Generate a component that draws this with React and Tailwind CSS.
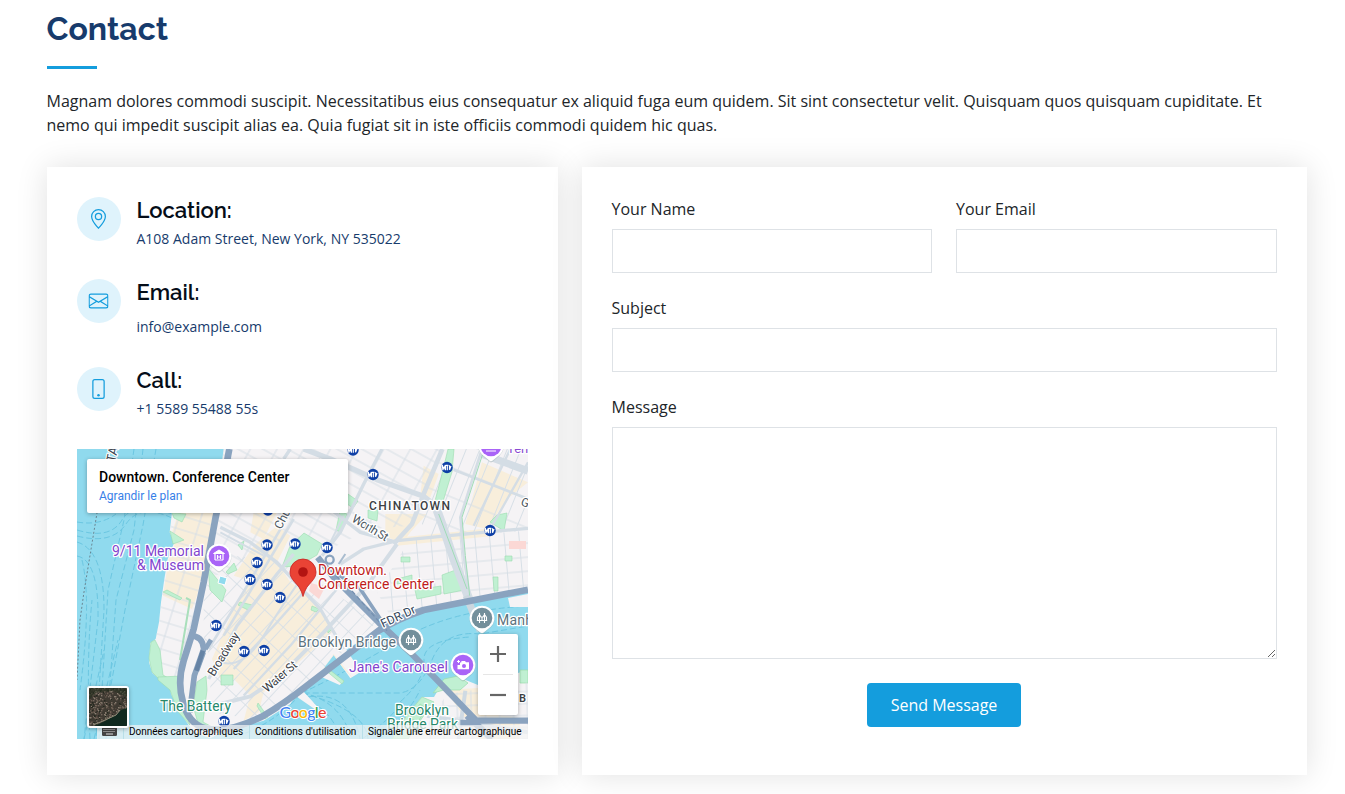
import React from "react";
import { BsGeoAlt, BsEnvelope, BsPhone } from "react-icons/bs";

const contacts = [
  { icon: BsGeoAlt, title: "Location:", text: "A108 Adam Street, New York, NY 535022", box: "h-[82px]", gap: "mt-[5px]" },
  { icon: BsEnvelope, title: "Email:", text: "info@example.com", box: "h-[88px]", gap: "mt-[11px]" },
  { icon: BsPhone, title: "Call:", text: "+1 5589 55488 55s", box: "h-[82px]", gap: "mt-[5px]" },
];

const metroStops = [
  [353, 450], [373, 474.5], [447, 467.5], [490, 530.5], [268, 510], [267, 545], [295, 544], [327, 547.5],
  [257, 562.5], [250, 579.5], [267, 584.5], [280, 597.5], [216, 625.5], [244, 651.5], [264, 650.5], [224, 721.5],
];

function Grid({ id, size, h, angle, width = 3, color = "#d7dfe6" }) {
  return (
    <pattern id={id} width={size} height={h} patternUnits="userSpaceOnUse" patternTransform={`rotate(${angle})`}>
      <path d={`M0 ${h / 2}H${size}M${size / 2} 0V${h}`} stroke={color} strokeWidth={width} fill="none" />
    </pattern>
  );
}

function Label({ x, y, w, children, fill, size = 14, weight = 400, rotate, spacing }) {
  return (
    <text
      x={x}
      y={y}
      textLength={w}
      fontSize={size}
      fontWeight={weight}
      fill={fill}
      stroke="#fff"
      strokeWidth="2.5"
      strokeLinejoin="round"
      paintOrder="stroke"
      letterSpacing={spacing}
      transform={rotate ? `rotate(${rotate} ${x} ${y})` : undefined}
    >
      {children}
    </text>
  );
}

function Poi({ x, y, fill, children }) {
  return (
    <g transform={`translate(${x} ${y})`}>
      <path d="M0-12.5a12.5 12.5 0 0 1 8.8 21.3L2 14.8Q0 16.5-2 14.8L-8.8 8.8A12.5 12.5 0 0 1 0-12.5Z" fill="#9aa" opacity=".35" transform="translate(0 .8)" />
      <path d="M0-12.3A12.3 12.3 0 0 1 8.7 8.7L2 14.2Q0 16-2 14.2L-8.7 8.7A12.3 12.3 0 0 1 0-12.3Z" fill="#fff" />
      <circle r="10.3" fill={fill} />
      {children}
    </g>
  );
}

const bridgeGlyph = (
  <path d="M-5.200 2.500H5.200M-2.500-5V5M2.500-5V5M-4.500-1V2.500M4.500-1V2.500M-4.700-.500L-2.500-3.500L-1-1H1L2.500-3.500L4.700-.500M0-1V2.500" stroke="#fff" strokeWidth="1.100" fill="none" />
);

const terrain = [];
for (let i = 0, s = 7; i < 420; i++) {
  s = (s * 16807) % 2147483647;
  const x = s % 38;
  s = (s * 16807) % 2147483647;
  const y = s % 38;
  s = (s * 16807) % 2147483647;
  if (x + y * 1.6 < 76) terrain.push([x, y, ["#8b7f72", "#54483f", "#25291f", "#6e6054", "#75685c"][s % 5]]);
}

const manhattan =
  "M440 0L415 190H285L278 250L292 280L272 330L262 390L252 460L246 520L236 570L220 582L216 640L226 672L244 688L275 686L282 735L312 795L350 850L400 868L440 846L560 815L640 765L655 740L716 782L722 774L676 724L725 680L788 708L800 697L742 655L770 618L820 688L852 668L808 602L850 575L940 528L1040 490L1353 425V0Z";

const routes = [
  [10, "M640 0L620 30M430 235L520 280L600 340L730 480L800 600"],
  [16, "M680 0L760 30L900 92L1040 142L1090 180"],
  [14, "M1096 0L1040 135L1005 225L950 285"],
  [26, "M1075 170L1095 225L1130 330L1182 465"],
  [10, "M395 690L480 530L600 375L650 315M735 320L790 250L860 105L915 0"],
  [8, "M395 600L520 395L590 275L640 190L730 30M440 560L545 385L650 210"],
  [10, "M740 165L850 250L960 280M790 345L860 300L960 275L1240 248L1353 238"],
  [12, "M430 765L520 742L600 690L740 550L870 410L960 285"],
  [8, "M1215 0L1150 205L1160 320L1178 440M1130 62L1353 150"],
  [22, "M1210 14L1353 66"],
  [7, "M1300 0L1190 230M1353 40L1240 240M500 740L640 590L780 420M470 660L600 520L680 430"],
  [6, "M430 640Q500 660 560 560T680 380M430 250L560 320M800 200L760 280"],
];

function CityMap() {
  return (
    <svg viewBox="77 449 451 290" width="451" height="290" className="block" fontFamily="Roboto, sans-serif">
      <defs>
        <Grid id="gWest" size={64} h={40} angle={17} />
        <Grid id="gCivic" size={70} h={36} angle={29} />
        <Grid id="gFi" size={62} h={38} angle={-47} width={2.6} />
        <Grid id="gEast" size={44} h={42} angle={-5} />
        <Grid id="gNorth" size={38} h={82} angle={22} />
        <Grid id="gBk" size={42} h={36} angle={-2} />
        <clipPath id="land"><path d={manhattan} /></clipPath>
      </defs>
      <path fill="#90daee" d="M77 449H528V739H77Z" />

      {/* ferry routes */}
      <g fill="none" stroke="#66c4e0" strokeWidth="1" strokeDasharray="6 3" opacity=".85">
        <path d="M134 449L124 520L108 590L99 739M143 449L134 530L116 600L106 739M156 449L143 525L125 610L110 690" />
        <path d="M77 530Q110 540 122 520T172 514M77 536Q112 545 126 524T172 518M77 542Q104 550 104 610L96 739M77 556Q99 560 98 620L84 739M82 560Q92 600 80 690M77 522Q100 526 116 514M90 739Q86 660 92 600" />
        <path d="M84 739L104 650M94 739L118 640" />
        <path d="M228 739Q270 728 302 693H400Q420 690 432 660T480 634L528 626M302 693Q350 670 400 640T528 606M302 693Q340 700 352 739M302 693Q366 710 368 739M308 697Q350 690 360 739M310 701Q335 715 340 739M400 702Q425 680 424 660T470 637" />
        <path d="M362 739Q390 720 402 702M380 739Q410 712 420 690" />
      </g>
      <path d="M108 449L97 513L84 592L80 620L77 680" fill="none" stroke="#6a8794" strokeWidth="1" strokeDasharray="2 2" />

      <g transform="translate(77 449) scale(.33333)" fill="none" strokeLinejoin="round">
        {/* Manhattan */}
        <path d={manhattan} fill="#f5f3f5" />
        <g clipPath="url(#land)">
          <g fill="#f8eedb">
            <path d="M305 190H412L395 290L360 440L345 480L258 440L275 330L292 290L285 250Z" />
            <path d="M405 630L470 480L520 395L470 380L530 290L600 230L640 260L600 340L640 400L700 440L770 545L700 610L560 730L545 790L500 815L520 740L470 690L430 690Z" />
            <path d="M530 190H600L560 270L520 250Z" />
            <path d="M925 195L1050 195L1000 250L975 285L925 260Z" />
            <path d="M1215 40L1353 100L1290 150L1230 240L1165 225Z" />
            <path d="M975 265L1240 238V262L960 290ZM1040 50L1085 75L1060 145L1030 140Z" />
            <path d="M725 680L770 615L830 690L780 640L760 640Z" />
          </g>
          <path d="M285 190H415L340 545L310 690H200L270 330Z" fill="url(#gWest)" />
          <path d="M430 0H1095L1000 230L880 240L760 300L640 260L380 400Z" fill="url(#gCivic)" />
          <path d="M380 420L470 320L640 340L900 520L560 815L400 790L400 640L380 560Z" fill="url(#gFi)" />
          <path d="M1000 270L1353 245V430L950 520L900 430Z" fill="url(#gEast)" />
          <path d="M1100 0H1353V245L1060 265L1020 200Z" fill="url(#gNorth)" />
        </g>
      </g>

      <g clipPath="none">
        {/* parks */}
        <g fill="#c0f0d2" stroke="#9bdcae" strokeWidth=".6">
          <path d="M282 567L290 546L304 533L322 544L317 555L298 566Z" />
          <path d="M448 449L454 449L452 472L441 508L435 501L443 470Z" />
          <path d="M348 494L358 501L353 508L347 504ZM340 511L347 514L341 532L336 530Z" />
          <path d="M497 515L507 513L504 531L490 522Z" />
          <path d="M442 575L461 568L464 590L444 594ZM397 579L412 575V581L397 584ZM401 557L410 557V562H401Z" />
          <path d="M368 510H378L377 521L368 518ZM505 556h7v5h-7zM415 590l26-4v8l-24 5zM493 577h5v14h-4z" />
          <path d="M172 513L186 514L182 522L174 518ZM170 531L184 540L173 544ZM163 592L167 590L182 598L180 600Z" />
          <path d="M208 568L226 590L222 602L210 590ZM226 572L234 563L237 570L228 574ZM238 545L244 541L242 550Z" />
          <path d="M155 640L160 650L163 675L170 679L160 680L152 672L149 658L151 642Z" />
          <path d="M158 677L183 676L180 690L184 708L190 725L178 712L170 690L158 680ZM197 682L206 676L207 690L203 722L214 728L200 730L193 706ZM221 675h12v10h-12zM258 703l10 14-3 2-8-13z" />
          <path d="M240 602l12 3-2 6-12-6zM312 606l7 3-3 3-5-2zM327 626l5 3-4 4zM326 667l18 14-2 3-18-15z" />
        </g>
        <path d="M220 576l7 2-2 7-7-2z" fill="#8fdaee" stroke="#fff" />
        <path d="M509 541l17 0v8h-17zM311 583l14 4-6 12-10-8z" fill="#fbd8d5" />
        <path d="M186 598L190 600L180 660" fill="none" stroke="#a9dfbb" strokeWidth="2" />

        {/* Brooklyn */}
        <path d="M392 739L407 715L422 697L434 697L444 680L458 677L478 685L528 670V739Z" fill="#f5f3f5" />
        <path d="M445 690L478 688V712L520 718L519 739H480Z" fill="#f8eedb" />
        <path d="M392 739L407 715L422 697L434 702L422 718L408 739ZM433 693L444 679L458 676L468 683L460 690L444 690ZM410 718l10-14 6 4-8 14zM520 670h8v13h-8z" fill="#c0f0d2" stroke="#9bdcae" strokeWidth=".7" />
        <path d="M508 598L528 594V607H510Z" fill="#f5f3f5" />
      </g>

      <g transform="translate(77 449) scale(.33333)" fill="none" strokeLinejoin="round">
        <path d="M1110 735L1210 720L1353 700V870H1020Z" fill="url(#gBk)" />
        {/* main streets */}
        <g stroke="#d4dde5" clipPath="url(#land)">
          {routes.map(([width, d]) => <path key={d} d={d} strokeWidth={width} />)}
        </g>
        <path d="M1145 870L1165 725M1050 800L1353 850" stroke="#cfdae3" strokeWidth="12" />
        <path d="M1168 440L1210 545" stroke="#ccd7df" strokeWidth="22" />
        <path d="M1222 0L1155 205L1165 320L1178 440M1085 195L1170 420" stroke="#9fdcb6" strokeWidth="3" />

        {/* expressways */}
        <g stroke="#8aa3bf">
          <path d="M457 0L440 90L415 210L380 400L350 540L320 635Q300 700 318 760Q335 825 385 838Q450 855 560 800Q620 765 690 710L905 545Q960 510 1040 483L1353 422" strokeWidth="20" />
          <path d="M338 560Q378 560 380 600L352 680L338 790" strokeWidth="17" />
          <path d="M380 610L360 665M385 600L402 572" strokeWidth="14" />
          <path d="M722 325L770 385L905 520L1000 610L1198 815H1353" strokeWidth="19" />
          <path d="M735 345L850 420L910 510" strokeWidth="11" />
          <circle cx="758" cy="332" r="12" strokeWidth="7" />
          <path d="M785 345L805 315" strokeWidth="6" stroke="#a9bccf" />
          <path d="M1170 800L1245 870M1150 822H1210" strokeWidth="20" />
        </g>
        <path d="M378 605L358 665" stroke="#6683a5" strokeWidth="14" />
        <path d="M745 350L820 420L930 545" stroke="#7590b0" strokeWidth="4" strokeDasharray="14 8" />
      </g>

      {/* transit */}
      {metroStops.map(([x, y]) => (
        <g key={`${x}-${y}`} transform={`translate(${x} ${y})`}>
          <circle r="5.700" fill="#0d3fa6" />
          <path d="M-4.800 2.800V-2.500L-3.200 1.500L-1.600-2.500V2.800M-1.200-2.100H1.400M.3-2V2.800M2.500-2.200V2.300L4-1.500" stroke="#fff" strokeWidth="1.200" fill="none" />
        </g>
      ))}

      <Label x={115} y={463} fill="#3c4650" size={13} rotate={-78}>TA</Label>
      <Label x={281} y={530} fill="#4a5560" size={12} rotate={-62}>Chur</Label>
      <Label x={351} y={521} w={40} fill="#4a5560" size={12} rotate={31}>Worth St</Label>
      <Label x={214} y={677} w={49} fill="#3c4248" size={12} rotate={-58}>Broadway</Label>
      <Label x={267} y={693} w={41} fill="#3c4248" size={12} rotate={-41}>Water St</Label>
      <Label x={383} y={628} w={37} fill="#34465a" size={12} rotate={-25}>FDR Dr</Label>
      <Label x={520} y={505} fill="#4a5560" size={12} rotate={20}>Gr</Label>
      <Label x={369} y={510} w={81} fill="#3c4043" size={12} weight={500}>CHINATOWN</Label>
      <Label x={507} y={453} fill="#8a4ad2" size={13}>Tene</Label>
      <Label x={112} y={556} w={92} fill="#8145ce">9/11 Memorial</Label>
      <Label x={137} y={570} w={67} fill="#8145ce">&amp; Museum</Label>
      <Label x={318} y={575} w={69} fill="#c01c1c">Downtown.</Label>
      <Label x={318} y={589} w={116} fill="#c01c1c">Conference Center</Label>
      <Label x={298} y={647} w={98} fill="#5b727d">Brooklyn Bridge</Label>
      <Label x={497} y={625} fill="#5b727d" spacing=".2">Manhattan</Label>
      <Label x={349} y={672} w={99} fill="#8145ce">Jane&apos;s Carousel</Label>
      <Label x={160} y={711} w={71} fill="#26896b">The Battery</Label>
      <Label x={395} y={715} w={54} fill="#26896b">Brooklyn</Label>
      <Label x={387} y={729} w={71} fill="#26896b">Bridge Park</Label>
      <Label x={519} y={702} fill="#3c4043" size={11} weight={600}>B</Label>

      <Poi x={219} y={556} fill="#a964f7">
        <path d="M-5.500-2.500L0-6L5.500-2.500ZM-4 4H4" fill="#fff" stroke="#fff" strokeWidth="1" />
        <path d="M-4-2V4M4-2V4M-1.500-1V3M1.500-1V3M-1.500 1H1.500" stroke="#fff" strokeWidth="1.200" />
      </Poi>
      <Poi x={463} y={665} fill="#a964f7">
        <path d="M-1.500-4H2l1 1.300h3v7H-5.500V0H-3V-2.500h1.200z" fill="#fff" /><circle cx="1" cy="1" r="2" fill="#a964f7" /><path d="M-4.500-5v3M-6-3.500h3" stroke="#fff" />
      </Poi>
      <Poi x={411} y={640} fill="#738f9b">{bridgeGlyph}</Poi>
      <Poi x={482} y={618} fill="#738f9b">{bridgeGlyph}</Poi>
      <Poi x={491} y={446} fill="#a964f7"><path d="M-5 5h10M-4 2h8" stroke="#fff" /></Poi>

      <path d="M303 596.500Q302 592 299 587C294 581 290 578 290 572A13 13 0 0 1 316 572C316 578 312 581 307 587Q304 592 303 596.500Z" fill="#ea4335" stroke="#c5221f" strokeWidth=".8" />
      <circle cx="303" cy="572" r="4.800" fill="#b31412" />

      <text x="279.500" y="718" fontSize="16" fontWeight="500" textLength="47" fontFamily="Lato, sans-serif" stroke="#fff" strokeWidth="2" paintOrder="stroke">
        <tspan fill="#4285f4">G</tspan><tspan fill="#ea4335">o</tspan><tspan fill="#fbbc04">o</tspan><tspan fill="#4285f4">g</tspan><tspan fill="#34a853">l</tspan><tspan fill="#ea4335">e</tspan>
      </text>
    </svg>
  );
}

function MapPanel() {
  return (
    <div className="relative ml-[0.5px] h-[290px] w-[451px] overflow-hidden font-['Roboto',sans-serif]">
      <CityMap />
      <div className="absolute left-[10px] top-[10px] h-[54px] w-[261px] rounded-[2px] bg-white pl-3 pt-[9px] shadow-[0_1px_4px_rgba(0,0,0,0.3)]">
        <div className="text-[14px] font-medium leading-[18px] text-black">Downtown. Conference Center</div>
        <div className="mt-px text-[12px] leading-[18px] text-[#3780e8]">Agrandir le plan</div>
      </div>
      <div className="absolute right-[10px] top-[185px] flex h-[81px] w-10 flex-col items-center rounded-[2px] bg-white shadow-[0_1px_4px_rgba(0,0,0,0.3)]">
        <svg width="40" height="40" viewBox="0 0 40 40"><path d="M12 20H28M20 12V28" stroke="#666" strokeWidth="2.200" /></svg>
        <div className="h-px w-[30px] bg-[#e6e6e6]" />
        <svg width="40" height="40" viewBox="0 0 40 40"><path d="M12 20H28" stroke="#666" strokeWidth="2.200" /></svg>
      </div>
      <div className="absolute bottom-0 right-0 flex h-[14px] w-[431px] items-center bg-[#f5f5f5]/70 text-[10px] leading-[14px] text-black">
        <span className="flex h-full w-[26px] shrink-0 items-center justify-center">
          <svg width="15" height="9" viewBox="0 0 15 9" className="-ml-px -mt-px">
            <rect width="15" height="9" rx="1.200" fill="#444" />
            <path d="M1.500 2.500H13.500M1.500 4.500H13.500" stroke="#ddd" strokeWidth="1" strokeDasharray="1 1" /><path d="M4 7H11" stroke="#ddd" strokeWidth="1" />
          </svg>
        </span>
        <span className="w-[126px] shrink-0 whitespace-nowrap border-l border-[#b9dfe8] pl-[5px]">Données cartographiques</span>
        <span className="w-[113px] shrink-0 whitespace-nowrap border-l border-[#b9dfe8] pl-[5px]">Conditions d&apos;utilisation</span>
        <span className="w-[166px] shrink-0 whitespace-nowrap border-l border-[#b9dfe8] pl-[5px]">Signaler une erreur cartographique</span>
      </div>
      <div className="absolute bottom-[11px] left-[10px] size-[42px] overflow-hidden rounded-[3px] border-2 border-white bg-white shadow-[0_1px_4px_rgba(0,0,0,0.3)]">
        <svg width="38" height="38" viewBox="0 0 38 38">
          <path d="M0 0H38V38H0Z" fill="#3f3a32" />
          {terrain.map(([x, y, c], i) => <rect key={i} x={x} y={y} width="1.400" height="1.400" fill={c} />)}
          <path d="M0 0H38V9L24 3L8 4L0 12Z" fill="#26301f" opacity=".6" />
          <path d="M6 38L14 34L27 27L32 22L38 20V38Z" fill="#10291f" />
          <path d="M4 37L14 33L27 27L31 22" stroke="#8f8c78" strokeWidth="1" fill="none" />
        </svg>
      </div>
    </div>
  );
}

function Field({ label, className = "", children }) {
  return (
    <label className={`flex flex-col gap-2 ${className}`}>
      <span className="leading-6">{label}</span>
      {children}
    </label>
  );
}

const control = "block w-full border border-[#dee2e6] bg-white px-[15px] outline-none";
const card = "bg-white p-[30px] shadow-[0_0_30px_rgba(0,0,0,0.12)]";

export default function App() {
  return (
    <div className="h-[794px] w-full overflow-hidden bg-white pl-[46.5px] pr-[38.5px] font-['Open_Sans',sans-serif] text-[16px] leading-6 text-[#212529]">
      <h2 className="pt-[10px] font-['Raleway','Lato',sans-serif] text-[32px] font-bold leading-[38px] text-[#173b6c]">Contact</h2>
      <div className="mt-[18px] h-[3px] w-[50px] bg-[#149ddd]" />
      <p className="mt-5 pr-[30px]">
        Magnam dolores commodi suscipit. Necessitatibus eius consequatur ex aliquid fuga eum quidem. Sit sint consectetur velit. Quisquam quos quisquam cupiditate. Et nemo qui impedit suscipit alias ea. Quia fugiat sit in iste officiis commodi quidem hic quas.
      </p>
      <div className="mt-[30px] grid h-[608px] grid-cols-[511px_725px] gap-6">
        <section className={card}>
          {contacts.map(({ icon: Icon, title, text, box, gap }) => (
            <div key={title} className={`flex ${box}`}>
              <span className="flex size-11 shrink-0 items-center justify-center rounded-full bg-[#dff3fc] text-[#149ddd]">
                <Icon size={20} className="-translate-x-[0.5px]" />
              </span>
              <div className="pl-4">
                <h3 className="font-['Raleway','Lato',sans-serif] text-[22px] font-semibold leading-[26px] text-[#050d18]">{title}</h3>
                <p className={`${gap} text-[14px] leading-[21px] text-[#173b6c]`}>{text}</p>
              </div>
            </div>
          ))}
          <MapPanel />
        </section>
        <form className={card} onSubmit={(e) => e.preventDefault()}>
          <div className="grid grid-cols-2 gap-x-6 gap-y-[23px]">
            <Field label="Your Name"><input type="text" className={`${control} h-11`} /></Field>
            <Field label="Your Email"><input type="email" className={`${control} h-11`} /></Field>
            <Field label="Subject" className="col-span-2"><input type="text" className={`${control} h-11`} /></Field>
            <Field label="Message" className="col-span-2"><textarea className={`${control} h-[232px] resize-y`} /></Field>
          </div>
          <div className="mt-6 flex justify-center">
            <button type="submit" className="h-11 w-[154px] rounded-[4px] bg-[#149ddd] text-white">Send Message</button>
          </div>
        </form>
      </div>
    </div>
  );
}
